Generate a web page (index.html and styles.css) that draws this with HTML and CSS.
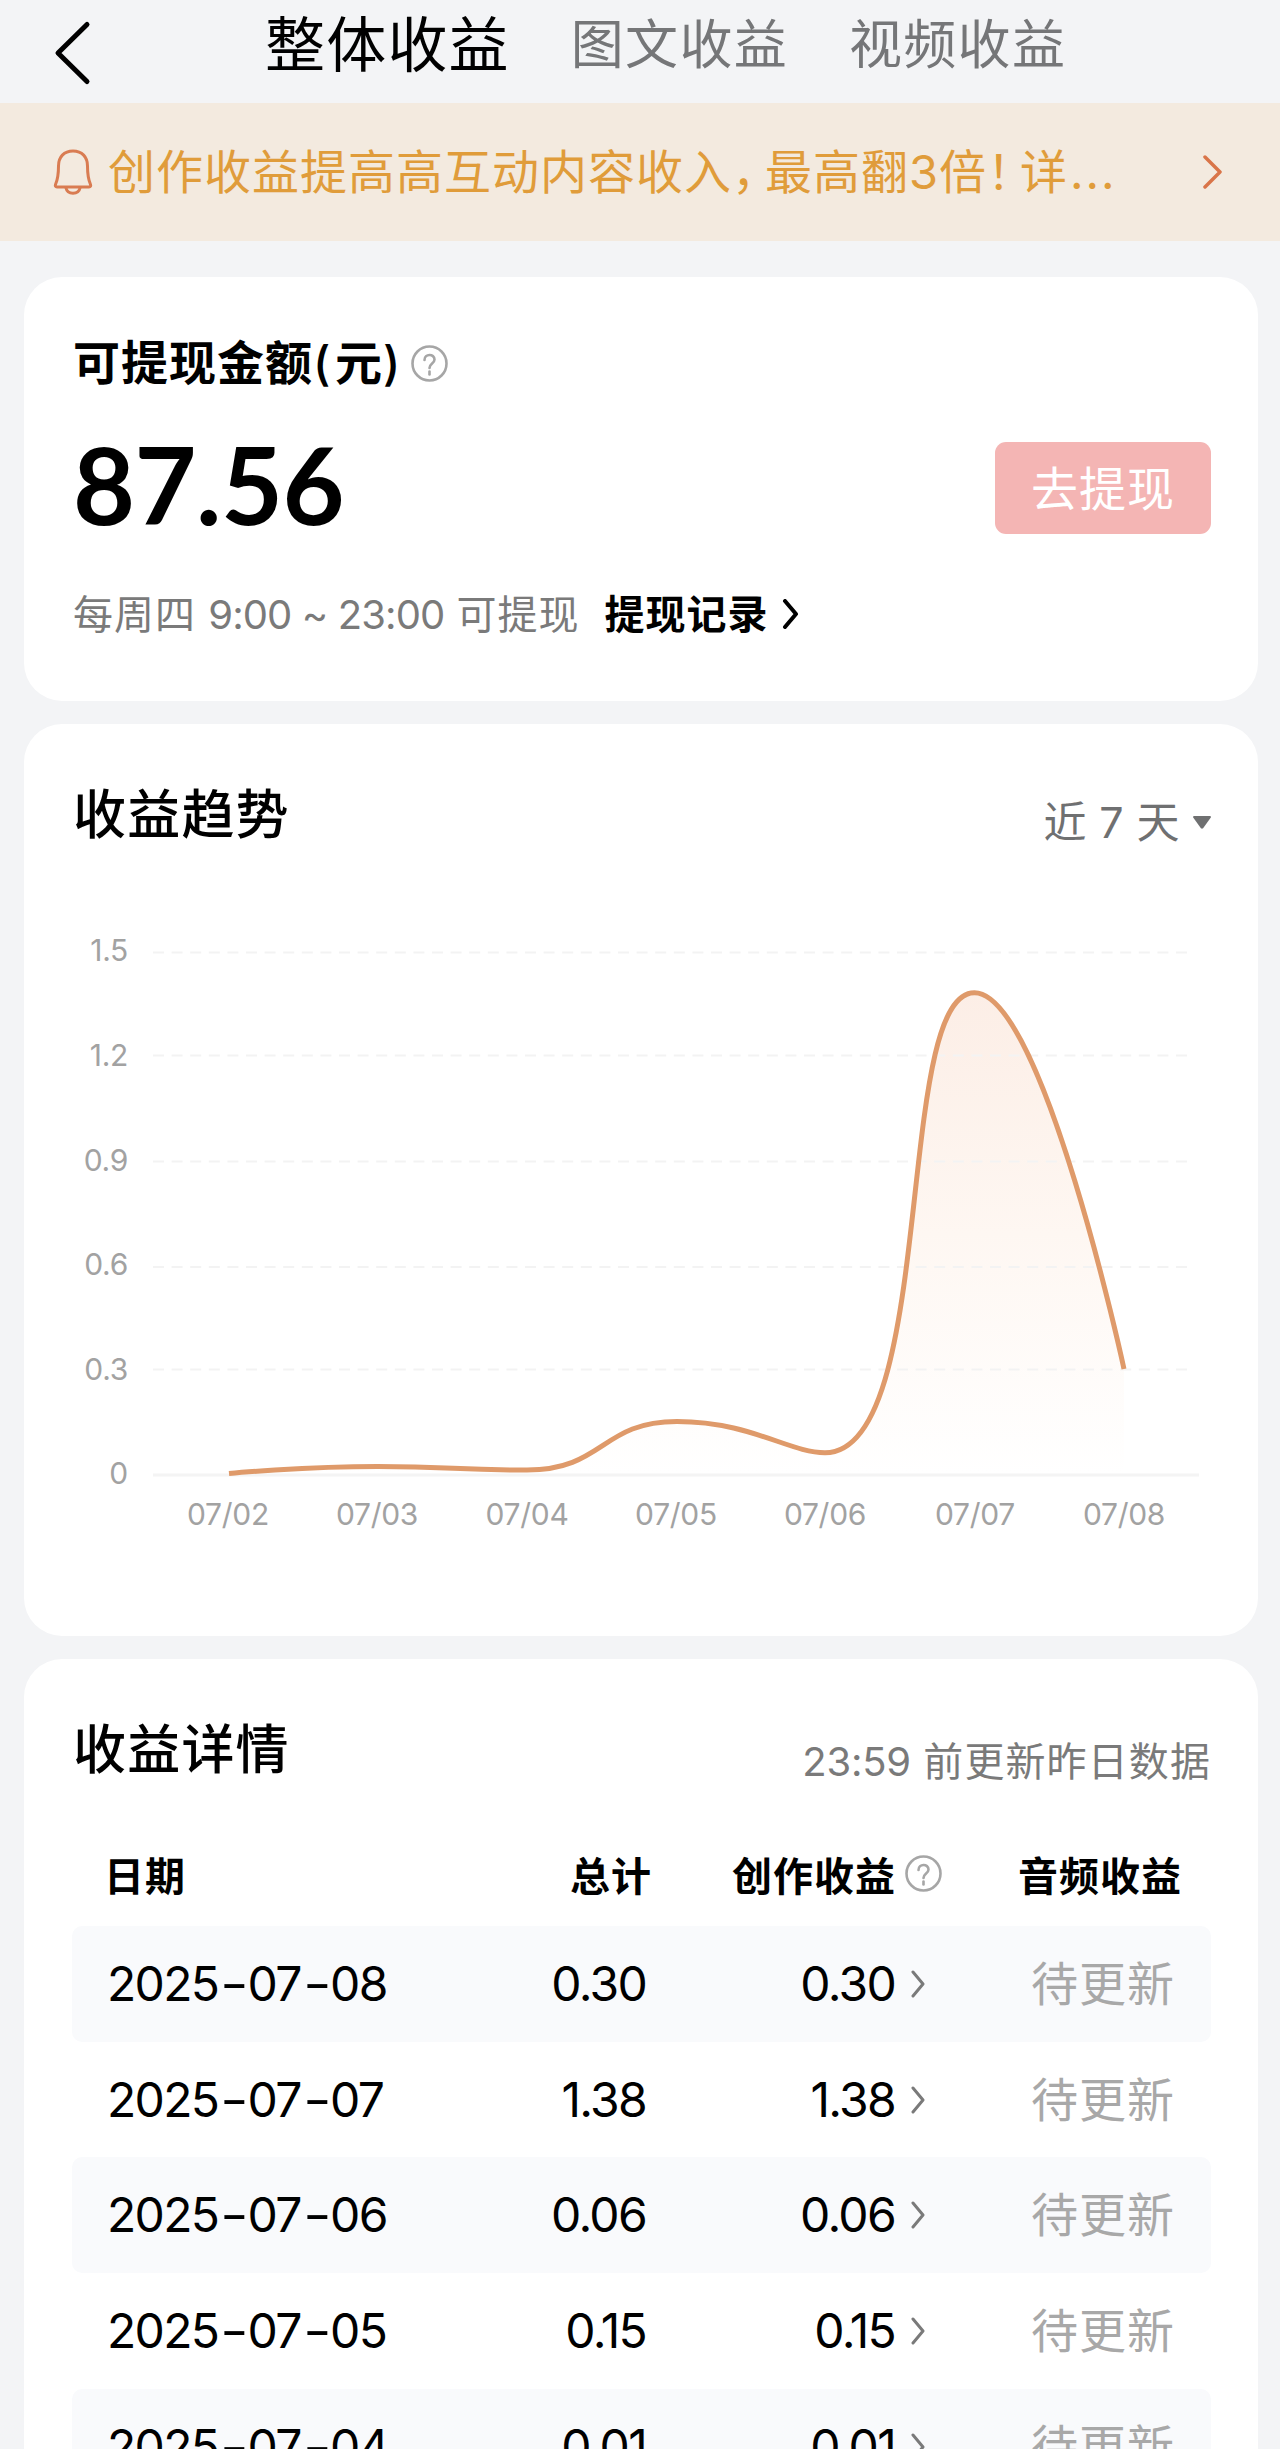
FILE: index.html
```html
<!DOCTYPE html>
<html lang="zh-CN">
<head>
    <meta charset="UTF-8">
    <title>收益</title>
    <link rel="stylesheet" href="styles.css">
</head>
<body>
    <header class="topbar">
        <svg class="back-icon" width="40" height="68" viewBox="0 0 40 68">
            <path d="M34 5.500 L5 34 L34 62.500"/>
        </svg>
        <nav class="tabs">
            <span class="tab active">整体收益</span>
            <span class="tab">图文收益</span>
            <span class="tab">视频收益</span>
        </nav>
    </header>

    <div class="notice">
        <svg class="bell-icon" width="40" height="48" viewBox="0 0 40 48">
            <path d="M20 3 C11 3 5.500 9 5.500 18 C5.500 27 4.500 32 2.500 36.500 C2 38 2.500 39 4 39 H36 C37.500 39 38 38 37.500 36.500 C35.500 32 34.500 27 34.500 18 C34.500 9 29 3 20 3 Z"/>
            <path d="M13 40 C14.500 47 25.500 47 27 40"/>
        </svg>
        <span class="notice-text">创作收益提高高互动内容收入<span class="punct">，</span>最高翻3倍<span class="punct">！</span>详<span class="dots">...</span></span>
        <svg class="notice-arrow" width="20" height="34" viewBox="0 0 20 34">
            <path d="M2 2 L17 17 L2 32"/>
        </svg>
    </div>

    <main>
        <section class="card balance-card">
            <div class="balance-title">
                可提现金额<span class="paren">(</span>元<span class="paren">)</span>
                <svg class="help-icon" width="37" height="37" viewBox="0 0 37 37">
                    <circle cx="18.500" cy="18.500" r="17"/>
                    <path d="M13.500 15 C13.500 8.500 23.500 8.500 23.500 14.500 C23.500 18.500 18.500 18.500 18.500 23"/>
                    <path d="M18.500 26.500 V29.500"/>
                </svg>
            </div>
            <div class="balance-row">
                <span class="balance-amount">87.56</span>
                <button class="withdraw-btn">去提现</button>
            </div>
            <div class="balance-note">
                <span class="note-time">每周四 <span class="num">9:00 ~ 23:00</span> 可提现</span>
                <span class="note-link">提现记录</span>
                <svg class="link-arrow" width="18" height="30" viewBox="0 0 18 30">
                    <path d="M3 2 L14 15 L3 28"/>
                </svg>
            </div>
        </section>

        <section class="card trend-card">
            <div class="card-header">
                <h2>收益趋势</h2>
                <div class="range-select">近 7 天<span class="caret"></span></div>
            </div>
            <svg class="chart" width="1138" height="620" viewBox="0 0 1138 620">
                <defs>
                    <linearGradient id="area" x1="0" y1="0" x2="0" y2="1">
                        <stop offset="0" stop-color="#fceee6"/>
                        <stop offset="0.5" stop-color="#fef7f2"/>
                        <stop offset="1" stop-color="#ffffff"/>
                    </linearGradient>
                </defs>
                <path class="chart-area" d="M155 549.500 C155 549.500 228 542.500 303.500 542.500 C378 542.500 380 546 453 546 C530 546 527 497.500 603 497.500 C676 497.500 715.600 528.700 751 528.700 C864 528.700 819.500 68.700 900.500 68.700 C968.500 68.700 1050 445 1050 445 V550 H155 Z"/>
                <g class="grid">
                    <path d="M79 28.500 H1120"/>
                    <path d="M79 131.500 H1120"/>
                    <path d="M79 237.500 H1120"/>
                    <path d="M79 343 H1120"/>
                    <path d="M79 445.500 H1120"/>
                    <path class="baseline" d="M79 551 H1125"/>
                </g>
                <path class="chart-line" d="M155 549.500 C155 549.500 228 542.500 303.500 542.500 C378 542.500 380 546 453 546 C530 546 527 497.500 603 497.500 C676 497.500 715.600 528.700 751 528.700 C864 528.700 819.500 68.700 900.500 68.700 C968.500 68.700 1050 445 1050 445"/>
                <g class="y-labels">
                    <text x="54" y="37">1.5</text>
                    <text x="54" y="142">1.2</text>
                    <text x="54" y="247">0.9</text>
                    <text x="54" y="351">0.6</text>
                    <text x="54" y="456">0.3</text>
                    <text x="54" y="560">0</text>
                </g>
                <g class="x-labels">
                    <text x="154" y="601">07/02</text>
                    <text x="303" y="601">07/03</text>
                    <text x="453" y="601">07/04</text>
                    <text x="602" y="601">07/05</text>
                    <text x="751" y="601">07/06</text>
                    <text x="901" y="601">07/07</text>
                    <text x="1050" y="601">07/08</text>
                </g>
            </svg>
        </section>

        <section class="card detail-card">
            <div class="card-header">
                <h2>收益详情</h2>
                <div class="update-note"><span class="num">23:59</span> 前更新昨日数据</div>
            </div>
            <div class="table">
                <div class="row head">
                    <span>日期</span>
                    <span class="total">总计</span>
                    <span class="create">创作收益
                        <svg class="help-icon" width="37" height="37" viewBox="0 0 37 37">
                            <circle cx="18.500" cy="18.500" r="17"/>
                            <path d="M13.500 15 C13.500 8.500 23.500 8.500 23.500 14.500 C23.500 18.500 18.500 18.500 18.500 23"/>
                            <path d="M18.500 26.500 V29.500"/>
                        </svg>
                    </span>
                    <span class="audio">音频收益</span>
                </div>
                <div class="row">
                    <span class="date">2025<i>-</i>07<i>-</i>08</span>
                    <span class="total">0.30</span>
                    <span class="create">0.30<svg class="row-arrow" width="15" height="28" viewBox="0 0 15 28"><path d="M2 2 L12 14 L2 26"/></svg></span>
                    <span class="audio">待更新</span>
                </div>
                <div class="row">
                    <span class="date">2025<i>-</i>07<i>-</i>07</span>
                    <span class="total">1.38</span>
                    <span class="create">1.38<svg class="row-arrow" width="15" height="28" viewBox="0 0 15 28"><path d="M2 2 L12 14 L2 26"/></svg></span>
                    <span class="audio">待更新</span>
                </div>
                <div class="row">
                    <span class="date">2025<i>-</i>07<i>-</i>06</span>
                    <span class="total">0.06</span>
                    <span class="create">0.06<svg class="row-arrow" width="15" height="28" viewBox="0 0 15 28"><path d="M2 2 L12 14 L2 26"/></svg></span>
                    <span class="audio">待更新</span>
                </div>
                <div class="row">
                    <span class="date">2025<i>-</i>07<i>-</i>05</span>
                    <span class="total">0.15</span>
                    <span class="create">0.15<svg class="row-arrow" width="15" height="28" viewBox="0 0 15 28"><path d="M2 2 L12 14 L2 26"/></svg></span>
                    <span class="audio">待更新</span>
                </div>
                <div class="row">
                    <span class="date">2025<i>-</i>07<i>-</i>04</span>
                    <span class="total">0.01</span>
                    <span class="create">0.01<svg class="row-arrow" width="15" height="28" viewBox="0 0 15 28"><path d="M2 2 L12 14 L2 26"/></svg></span>
                    <span class="audio">待更新</span>
                </div>
            </div>
        </section>
    </main>
</body>
</html>
```
FILE: styles.css
```css
* {
    box-sizing: border-box;
}

body {
    margin: 0;
    height: 2449px;
    overflow: hidden;
    background-color: #f3f4f6;
    color: #000;
    font-family: Inter, "Noto Sans CJK SC", sans-serif;
}

svg {
    display: block;
    flex: none;
    fill: none;
    stroke-linecap: round;
    stroke-linejoin: round;
}

/* Top bar */
.topbar {
    display: flex;
    height: 103px;
    padding-left: 53px;
}

.back-icon {
    margin-top: 19px;
    stroke: #000;
    stroke-width: 5;
}

.tabs {
    display: flex;
    align-items: center;
    gap: 61px;
    height: 90px;
    margin-left: 172px;
    white-space: nowrap;
}

.tab {
    font-size: 53px;
    letter-spacing: 1.3px;
    line-height: 90px;
    color: #757678;
}

.tab.active {
    font-size: 60px;
    letter-spacing: 1.2px;
    color: #000;
}

/* Notice bar */
.notice {
    display: flex;
    align-items: center;
    height: 138px;
    padding: 0 57px 0 53px;
    background-color: #f3eadf;
}

.bell-icon {
    stroke: #d97c52;
    stroke-width: 3;
}

.notice-text {
    flex: 1;
    margin-left: 15px;
    font-size: 47px;
    letter-spacing: 1px;
    line-height: 62px;
    white-space: nowrap;
    color: #e09c3a;
}

.punct {
    display: inline-block;
    width: 33px;
    font-feature-settings: "halt";
}

.dots {
    margin-left: 2px;
    letter-spacing: 2px;
}

.notice-arrow {
    stroke: #d97549;
    stroke-width: 3.5;
}

/* Cards */
main {
    display: flex;
    flex-direction: column;
    gap: 23px;
    padding: 36px 22px 0 24px;
}

.card {
    padding: 60px 47px 0 49px;
    background-color: #fff;
    border-radius: 38px;
}

.card-header {
    display: flex;
    justify-content: space-between;
    height: 60px;
}

.card-header h2 {
    margin: 0;
    font-size: 53px;
    font-weight: 500;
    letter-spacing: 1.2px;
    line-height: 62px;
}

.help-icon {
    stroke: #a6a6a6;
    stroke-width: 2.6;
}

/* Balance */
.balance-card {
    height: 424px;
    padding-top: 56px;
}

.balance-title {
    display: flex;
    align-items: center;
    height: 60px;
    font-size: 47px;
    font-weight: 600;
    letter-spacing: 1px;
    line-height: 60px;
}

.balance-title .help-icon {
    margin-left: 6px;
}

.paren {
    width: 22px;
    font-weight: 500;
}

.balance-row {
    display: flex;
    justify-content: space-between;
    align-items: center;
    height: 92px;
    margin-top: 49px;
}

.balance-amount {
    font-family: Lato, sans-serif;
    font-size: 107px;
    font-weight: 700;
    letter-spacing: -0.5px;
    line-height: 84px;
    height: 92px;
}

.withdraw-btn {
    width: 216px;
    height: 92px;
    padding: 0 0 5px;
    border: none;
    border-radius: 11px;
    background-color: #f4b5b4;
    color: #fff;
    font-family: inherit;
    font-size: 47px;
    letter-spacing: 1px;
}

.balance-note {
    display: flex;
    align-items: center;
    height: 50px;
    margin-top: 55px;
    font-size: 40px;
    letter-spacing: 1px;
    line-height: 51px;
}

.note-time {
    color: #7a7a7a;
}

.num {
    letter-spacing: -0.9px;
}

.note-link {
    margin-left: 25px;
    font-weight: 600;
}

.link-arrow {
    margin-left: 13px;
    stroke: #000;
    stroke-width: 4;
}

/* Trend */
.trend-card {
    height: 912px;
}

.range-select {
    display: flex;
    align-items: center;
    height: 76px;
    font-size: 43px;
    letter-spacing: 0.4px;
    line-height: 76px;
    color: #6f7071;
}

.caret {
    width: 18px;
    height: 13px;
    margin-left: 13px;
    background-color: #6f7071;
    clip-path: polygon(4% 0, 96% 0, 100% 14%, 55% 100%, 45% 100%, 0 14%);
}

.chart {
    margin: 80px 0 0 1px;
}

.grid path {
    stroke: #f3f3f3;
    stroke-width: 2;
    stroke-dasharray: 11 7.600;
    stroke-linecap: butt;
}

.grid .baseline {
    stroke: #f4f4f4;
    stroke-width: 3;
    stroke-dasharray: none;
}

.chart-area {
    fill: url(#area);
}

.chart-line {
    stroke: #df9a6a;
    stroke-width: 5;
    stroke-linecap: butt;
}

.chart text {
    font-size: 30px;
    letter-spacing: -0.3px;
    fill: #a2a2a2;
}

.y-labels {
    text-anchor: end;
}

.x-labels {
    text-anchor: middle;
}

/* Detail table */
.detail-card {
    height: 860px;
}

.update-note {
    font-size: 40px;
    letter-spacing: 1.1px;
    line-height: 86px;
    color: #7a7a7a;
}

.update-note .num {
    letter-spacing: -0.2px;
}

.table {
    margin: 47px 0 0 -1px;
}

.row {
    display: grid;
    grid-template-columns: 300px 244px 289px 240px;
    align-items: center;
    height: 115.7px;
    padding-left: 35px;
    border-radius: 10px;
    font-size: 48px;
    letter-spacing: -1.7px;
    line-height: 60px;
}

.row:nth-child(even) {
    background-color: #f9fafc;
}

.row .total,
.row .audio {
    text-align: right;
    padding-right: 5px;
}

.row .create {
    display: flex;
    justify-content: flex-end;
    align-items: center;
    padding-right: 14px;
}

.row .audio {
    font-size: 47px;
    letter-spacing: 1px;
    line-height: 62px;
    color: #a8a8a8;
}

.date i {
    display: inline-block;
    margin: 0 4px 0 5px;
    font-style: normal;
    transform: scaleX(1.3);
}

.row-arrow {
    margin-left: 16px;
    stroke: #7a7a7a;
    stroke-width: 3;
}

.row.head {
    height: 100px;
    padding: 1px 0 0 32px;
    grid-template-columns: 303px 245px 290px 240px;
    font-size: 40px;
    font-weight: 600;
    letter-spacing: 1px;
}

.row.head .total,
.row.head .create,
.row.head .audio {
    padding-right: 0;
}

.row.head .audio {
    font-size: 40px;
    line-height: 60px;
    color: #000;
}

.row.head .help-icon {
    margin: -7px 0 0 9px;
}
```
